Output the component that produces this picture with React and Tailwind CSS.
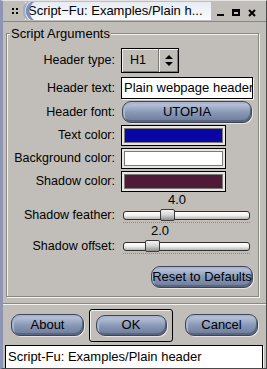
import React from 'react';

const pill =
    'flex items-center justify-center rounded-[9px] border border-[#3c4458] bg-gradient-to-b from-[#c3cde0] via-[#8b99b8] to-[#6c7a9a] shadow-[inset_2px_2px_0_#a9b6cf,inset_-1px_-2px_0_#5a6680,1px_1px_0_#e6e4e0] text-black';

function Swatch({ color }) {
    return (
        <div className="w-[105px] h-[21px] border border-black bg-[#e8e6e2] p-[2px]">
            <div className="w-full h-full border border-[#7c7a76]" style={{ background: color }} />
        </div>
    );
}

function Slider({ thumb }) {
    return (
        <div className="relative w-[127px] h-[12px]">
            <div className="absolute left-0 right-0 top-[1px] h-[9px] rounded-[3px] border border-[#2e2e2e] bg-gradient-to-b from-[#ffffff] via-[#f0f0ee] to-[#b8b6b2]" />
            <div
                className="absolute top-[-1px] w-[15px] h-[12px] rounded-[2px] border border-[#3a3a3a] bg-gradient-to-b from-[#f4f4f4] via-[#d4d4d2] to-[#8e8e8c]"
                style={{ left: thumb }}
            />
            <div className="absolute left-0 right-0 top-[12px] h-[1px] border-t border-dotted border-[#8a8884]" />
        </div>
    );
}

function Row({ label, children, className = '' }) {
    return (
        <div className={`flex items-center ${className}`}>
            <div className="w-[110px] text-right pr-[1px] leading-[15px]">{label}</div>
            <div className="ml-[5px]">{children}</div>
        </div>
    );
}

export default function App() {
    return (
        <div className="w-[267px] h-[369px] bg-[#c1beb9] font-['Liberation_Sans',Arial,sans-serif] text-[12.5px] text-black overflow-hidden relative border-l-[3px] border-l-[#8d94b4] border-r border-r-[#4a4a4a] border-b border-b-[#4a4a4a] border-t border-t-[#e6e4e0]">
            {/* title bar */}
            <div className="h-[21px] flex items-center border-b border-[#8a8782]">
                <div className="w-[22px] flex justify-center pl-[1px]">
                    <div className="grid grid-cols-2 gap-[2px]">
                        <div className="w-[2px] h-[2px] bg-black" />
                        <div className="w-[2px] h-[2px] bg-black" />
                        <div className="w-[2px] h-[2px] bg-black" />
                        <div className="w-[2px] h-[2px] bg-black" />
                    </div>
                </div>
                <div className="relative h-[18px] w-[186px] bg-gradient-to-b from-[#e7ebf3] to-[#fbfcfe] flex items-center">
                    <svg className="absolute left-[-2px] top-0" width="12" height="18" viewBox="0 0 12 18">
                        <path d="M8 0 C1 4 1 14 8 18 L11 18 C5 14 5 4 11 0 Z" fill="#7e8cb8" />
                        <path d="M4 0 C-2 5 -2 13 4 18 L6 18 C1 13 1 5 6 0 Z" fill="#a2acc8" />
                    </svg>
                    <span className="ml-[3px] text-[13px] whitespace-nowrap">Script−Fu: Examples/Plain h...</span>
                </div>
                <div className="flex items-center gap-[8px] ml-[6px] mt-[3px]">
                    <div className="w-[7px] h-[7px] flex items-end">
                        <div className="w-[7px] h-[2px] bg-black" />
                    </div>
                    <div className="w-[8px] h-[7px] border-[2px] border-black border-t-[3px]" />
                    <svg width="8" height="8" viewBox="0 0 8 8">
                        <path d="M1 1 L7 7 M7 1 L1 7" stroke="black" strokeWidth="2" />
                    </svg>
                </div>
            </div>

            {/* group box */}
            <div className="relative mt-[11px] ml-[3px] w-[253px] h-[264px] border border-[#8a8782] shadow-[inset_1px_1px_0_#f4f2ee,1px_1px_0_#f4f2ee]">
                <div className="absolute left-[3px] top-[-8px] px-[1px] bg-[#c1beb9] text-[13px] leading-[15px]">Script Arguments</div>
                <div className="flex flex-col pt-[14px] -ml-[1px]">
                    <Row label="Header type:">
                        <div className="w-[58px] h-[25px] border border-black bg-[#c1beb9] flex shadow-[inset_1px_1px_0_#f2f0ec,inset_-1px_-1px_0_#7c7a76]">
                            <div className="w-[37px] flex items-center pl-[8px] border-r border-[#7c7a76] shadow-[1px_0_0_#f2f0ec]">H1</div>
                            <div className="flex-1 flex items-center justify-center">
                                <svg width="8" height="11" viewBox="0 0 8 11">
                                    <path d="M4 0 L8 4 L0 4 Z M4 11 L8 7 L0 7 Z" fill="black" />
                                </svg>
                            </div>
                        </div>
                    </Row>
                    <Row label="Header text:" className="mt-[4px]">
                        <div className="w-[132px] h-[22px] border border-black bg-white flex items-center pl-[2px] text-[13px] whitespace-nowrap overflow-hidden shadow-[1px_1px_0_#f4f2ee]">
                            Plain webpage header
                        </div>
                    </Row>
                    <Row label="Header font:" className="mt-[2px]">
                        <div className={`${pill} w-[130px] h-[22px] ml-[1px] text-[13px]`}>UTOPIA</div>
                    </Row>
                    <Row label="Text color:" className="mt-[2px]">
                        <Swatch color="#0a06a6" />
                    </Row>
                    <Row label="Background color:" className="mt-[2px]">
                        <Swatch color="#ffffff" />
                    </Row>
                    <Row label="Shadow color:" className="mt-[2px]">
                        <Swatch color="#4e1a38" />
                    </Row>
                    <div className="ml-[162px] mt-[1px] text-[13px] leading-[14px]">4.0</div>
                    <Row label="Shadow feather:" className="mt-[1px]">
                        <div className="ml-[2px]">
                            <Slider thumb={37} />
                        </div>
                    </Row>
                    <div className="ml-[145px] mt-[1px] text-[13px] leading-[14px]">2.0</div>
                    <Row label="Shadow offset:" className="mt-[1px]">
                        <div className="ml-[2px]">
                            <Slider thumb={22} />
                        </div>
                    </Row>
                    <div className="flex justify-end mt-[12px] pr-[5px]">
                        <div className={`${pill} w-[102px] h-[22px] text-[13px]`}>Reset to Defaults</div>
                    </div>
                </div>
            </div>

            {/* separator */}
            <div className="mt-[6px] h-[2px] border-t border-[#8a8782] border-b border-b-[#f4f2ee]" />

            {/* action buttons */}
            <div className="flex items-center mt-[1px] h-[38px] pl-[8px]">
                <div className={`${pill} w-[73px] h-[22px] text-[13px]`}>About</div>
                <div className="ml-[5px] w-[84px] h-[33px] border border-black rounded-[3px] flex items-center justify-center shadow-[inset_1px_1px_0_#f4f2ee]">
                    <div className={`${pill} w-[71px] h-[21px] text-[13px]`}>OK</div>
                </div>
                <div className={`${pill} w-[73px] h-[22px] ml-[12px] text-[13px]`}>Cancel</div>
            </div>

            {/* status */}
            <div className="mt-[1px] ml-[2px] w-[258px] h-[24px] border border-black bg-white flex items-center pl-[2px] text-[13px] whitespace-nowrap shadow-[1px_1px_0_#f4f2ee]">
                Script-Fu: Examples/Plain header
            </div>
        </div>
    );
}
